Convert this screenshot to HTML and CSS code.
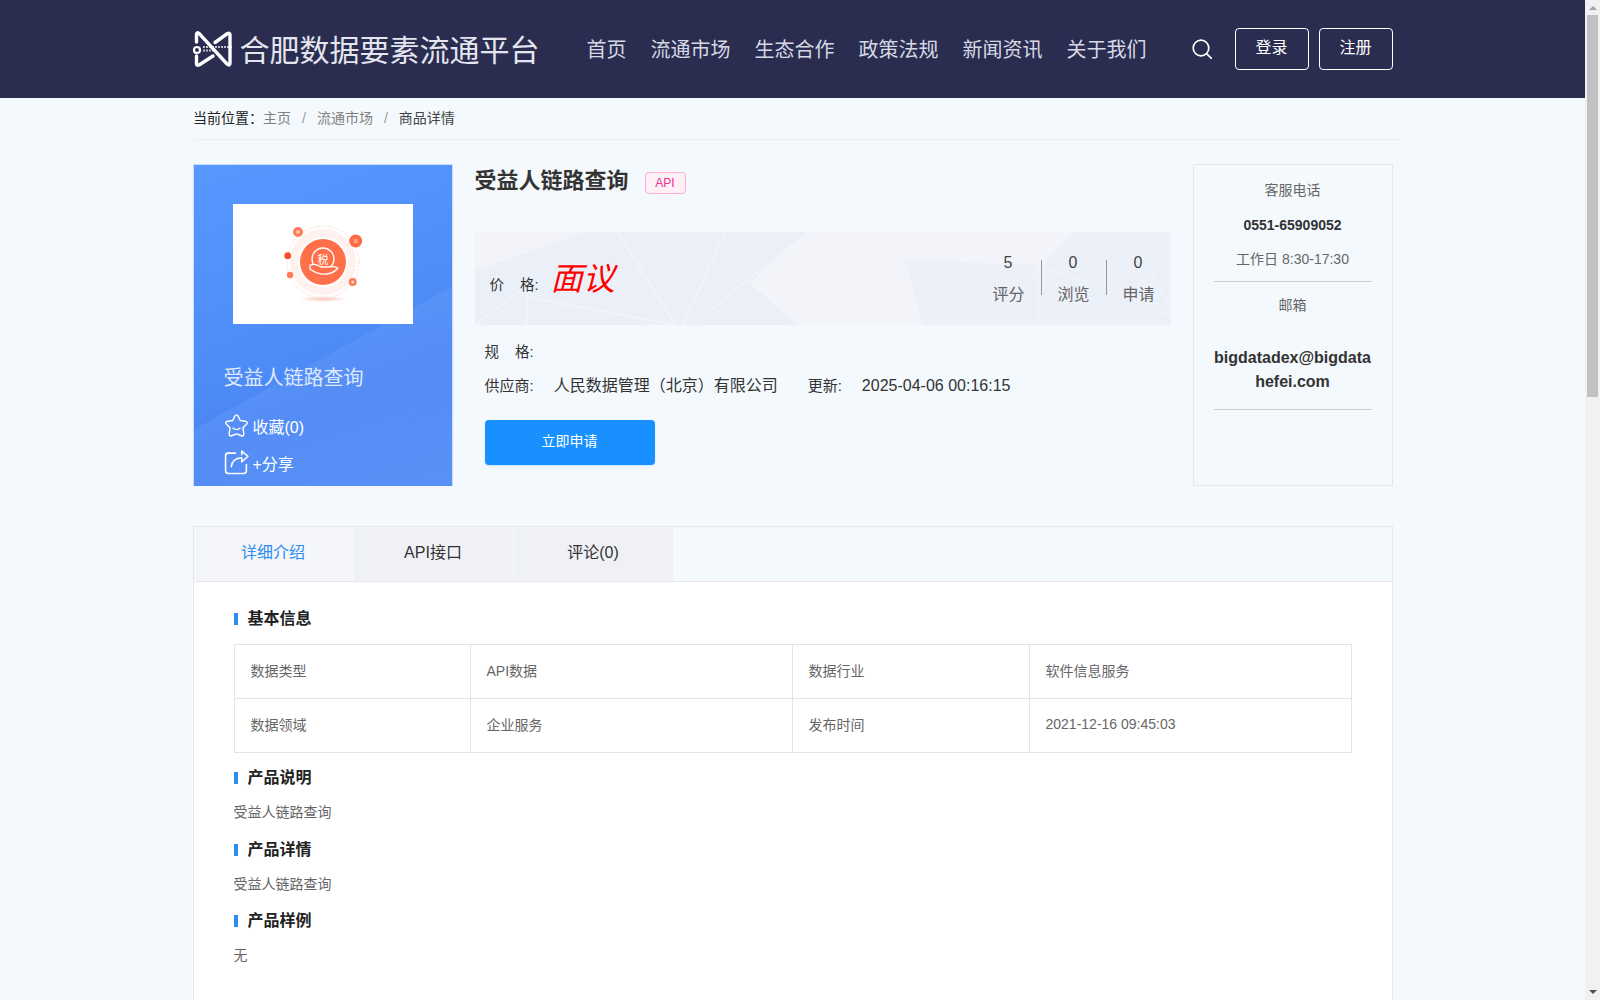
FILE: index.html
```html
<!DOCTYPE html>
<html lang="zh-CN">
<head>
    <meta charset="UTF-8">
    <title>合肥数据要素流通平台</title>
    <link rel="stylesheet" href="styles.css">
</head>
<body>
    <div class="page">
        <header class="header">
            <div class="wrap header-inner">
                <a class="brand">
                    <svg class="brand-logo" viewBox="0 0 40 40">
                        <path d="M3.500 13V5.500Q3.500 3 5.800 4.200L34 35Q37 37.500 37 34V6Q37 3.500 34.500 4.500L22 13.500" fill="none" stroke="#fff" stroke-width="3.400" stroke-linejoin="round" stroke-linecap="round"/>
                        <path d="M3.500 27V34.500Q3.500 37 6 36L20 27" fill="none" stroke="#fff" stroke-width="3.400" stroke-linejoin="round" stroke-linecap="round"/>
                        <circle cx="4" cy="21" r="3" fill="#2a2d50" stroke="#fff" stroke-width="2.200"/>
                        <path d="M10 18H39" stroke="#fff" stroke-width="2" stroke-dasharray="2 1" opacity="0.700"/>
                        <path d="M10 21.500H20" stroke="#fff" stroke-width="2" stroke-dasharray="2 1" opacity="0.700"/>
                    </svg>
                    <span class="brand-name">合肥数据要素流通平台</span>
                </a>
                <nav class="nav">
                    <a>首页</a>
                    <a>流通市场</a>
                    <a>生态合作</a>
                    <a>政策法规</a>
                    <a>新闻资讯</a>
                    <a>关于我们</a>
                </nav>
                <svg class="search-icon" viewBox="0 0 20 20">
                    <circle cx="9" cy="9" r="7.800" fill="none" stroke="#fff" stroke-width="1.700"/>
                    <path d="M14.600 14.600L19.400 19.400" stroke="#fff" stroke-width="1.700" stroke-linecap="round"/>
                </svg>
                <a class="head-btn">登录</a>
                <a class="head-btn">注册</a>
            </div>
        </header>

        <div class="crumbs">
            <span class="crumbs-label">当前位置：</span><a>主页</a><i>/</i><a>流通市场</a><i>/</i><span class="crumbs-now">商品详情</span>
        </div>

        <div class="wrap product">
            <div class="cover">
                <div class="cover-img">
                    <svg viewBox="0 0 180 120" width="180" height="120">
                        <defs>
                            <radialGradient id="shade"><stop offset="0" stop-color="#f8c4ba"/><stop offset="1" stop-color="#fff"/></radialGradient>
                        </defs>
                        <ellipse cx="90" cy="95" rx="24" ry="3" fill="url(#shade)"/>
                        <circle cx="90" cy="58" r="36" fill="none" stroke="#fbdcd5" stroke-width="1" stroke-dasharray="2 1.500"/>
                        <circle cx="90" cy="58" r="29" fill="none" stroke="#fef1ee" stroke-width="8"/>
                        <circle cx="90" cy="58" r="23" fill="#ff704a"/>
                        <circle cx="90" cy="55" r="11" fill="none" stroke="#fff" stroke-width="1.300"/>
                        <text class="tax-char" x="90" y="59.500">税</text>
                        <path d="M77 61Q83 59 88 63L96 63Q101 62 105 64Q101 69 94 70Q85 71 77 65Z" fill="#ff704a" stroke="#fff" stroke-width="1.300" stroke-linejoin="round"/>
                        <circle cx="65" cy="28" r="5" fill="#ff7a55"/>
                        <circle cx="122.700" cy="37" r="6.500" fill="#ff6a42"/>
                        <circle cx="54.700" cy="51.700" r="3.400" fill="#f4502a"/>
                        <circle cx="57" cy="71" r="3.200" fill="#ff7a55"/>
                        <circle cx="119.700" cy="78" r="4" fill="#ff7a55"/>
                        <circle cx="119.700" cy="78" r="1.600" fill="#fff" opacity="0.700"/>
                        <circle cx="65" cy="28" r="2" fill="#fff" opacity="0.500"/>
                        <circle cx="122.700" cy="37" r="2.400" fill="#fff" opacity="0.350"/>
                    </svg>
                </div>
                <h2 class="cover-title">受益人链路查询</h2>
                <div class="cover-act">
                    <svg viewBox="0 0 24 24" width="25" height="25">
                        <path d="M12 1.800Q13 1.800 13.600 3L15.600 7.200 20.800 8Q23 8.600 22 10.400L18.200 14.200 19 19.800Q19 22.600 16.800 21.800L12 20 7.200 21.800Q5 22.600 5 19.800L5.800 14.200 2 10.400Q1 8.600 3.200 8L8.400 7.200 10.400 3Q11 1.800 12 1.800Z" fill="none" stroke="#fff" stroke-width="1.400" stroke-linejoin="round"/>
                        <path d="M8.500 14.500Q12 17.500 15.500 14.500" fill="none" stroke="#fff" stroke-width="1.300" stroke-linecap="round"/>
                    </svg>
                    <span>收藏(0)</span>
                </div>
                <div class="cover-act">
                    <svg viewBox="0 0 24 24" width="25" height="25">
                        <path d="M11 3H4Q1.500 3 1.500 5.500V20Q1.500 22.500 4 22.500H19Q21.500 22.500 21.500 20V14" fill="none" stroke="#fff" stroke-width="1.500" stroke-linecap="round"/>
                        <path d="M7 16Q8 8 17 7.500V11.500L23 6 17 1V4.500" fill="none" stroke="#fff" stroke-width="1.500" stroke-linecap="round" stroke-linejoin="round"/>
                    </svg>
                    <span>+分享</span>
                </div>
            </div>

            <div class="info">
                <div class="info-head">
                    <h1>受益人链路查询</h1>
                    <span class="tag">API</span>
                </div>
                <div class="band">
                    <svg class="band-bg" viewBox="0 0 696 93" preserveAspectRatio="none">
                        <polygon points="0,39 110,0 333,0 275,51 322,93 0,93" fill="#ebf0f8"/>
                        <polygon points="430,28 567,33 600,0 696,0 696,93 448,93" fill="#ebf0f9"/>
                        <g stroke="#fff" fill="none" stroke-width="1.500" opacity="0.350">
                            <path d="M143 0L200 93M250 0L208 93M333 0L217 93M0 93L52 53V93M52 65L200 93"/>
                            <path d="M653 0L696 76M563 34L696 76M567 33L517 93M563 93V35M696 78L667 93"/>
                        </g>
                    </svg>
                    <div class="price">
                        <span class="price-label">价&nbsp;&nbsp;&nbsp;&nbsp;格:</span>
                        <span class="price-value">面议</span>
                    </div>
                    <div class="stats">
                        <div class="stat"><b>5</b><span>评分</span></div>
                        <div class="stat"><b>0</b><span>浏览</span></div>
                        <div class="stat"><b>0</b><span>申请</span></div>
                    </div>
                </div>
                <div class="spec">规&nbsp;&nbsp;&nbsp;&nbsp;格:</div>
                <div class="supplier">
                    <span class="supplier-label">供应商:</span>
                    <span class="supplier-name">人民数据管理（北京）有限公司</span>
                    <span class="supplier-label update-label">更新:</span>
                    <span class="supplier-date">2025-04-06 00:16:15</span>
                </div>
                <a class="apply">立即申请</a>
            </div>

            <aside class="service">
                <p>客服电话</p>
                <p class="service-phone">0551-65909052</p>
                <p class="service-time">工作日 8:30-17:30</p>
                <hr>
                <p>邮箱</p>
                <p class="service-mail">bigdatadex@bigdatahefei.com</p>
                <hr>
            </aside>
        </div>

        <section class="wrap detail">
            <div class="tabs">
                <a class="tab active">详细介绍</a>
                <a class="tab">API接口</a>
                <a class="tab">评论(0)</a>
            </div>
            <div class="tab-body">
                <h3 class="sec-title">基本信息</h3>
                <table class="base-table">
                    <tr>
                        <td class="col-a">数据类型</td>
                        <td class="col-b">API数据</td>
                        <td class="col-c">数据行业</td>
                        <td>软件信息服务</td>
                    </tr>
                    <tr>
                        <td>数据领域</td>
                        <td>企业服务</td>
                        <td>发布时间</td>
                        <td>2021-12-16 09:45:03</td>
                    </tr>
                </table>
                <h3 class="sec-title">产品说明</h3>
                <p class="sec-text">受益人链路查询</p>
                <h3 class="sec-title">产品详情</h3>
                <p class="sec-text">受益人链路查询</p>
                <h3 class="sec-title">产品样例</h3>
                <p class="sec-text">无</p>
            </div>
        </section>
    </div>

    <div class="scrollbar">
        <span class="arrow arrow-up"></span>
        <div class="scrollbar-track"><div class="scrollbar-thumb"></div></div>
        <span class="arrow arrow-down"></span>
    </div>
</body>
</html>
```

FILE: styles.css
```css
* {
    box-sizing: border-box;
}

html, body {
    height: 100%;
    margin: 0;
    overflow: hidden;
}

body {
    display: flex;
    background: #f4f9fd;
    color: #333;
    font-family: "Liberation Sans", "Noto Sans CJK SC", sans-serif;
    font-size: 14px;
}

p, h1, h2, h3 {
    margin: 0;
}

.page {
    flex: 1;
    min-width: 0;
    overflow: hidden;
}

.wrap {
    width: 1200px;
    margin: 0 auto;
}

/* header */
.header {
    height: 98px;
    background: #2a2d50;
}

.header-inner {
    height: 100%;
    display: flex;
    align-items: center;
}

.brand {
    display: flex;
    align-items: center;
    flex: none;
}

.brand-logo {
    width: 40px;
    height: 40px;
}

.brand-name {
    margin-left: 7px;
    margin-top: -3px;
    font-size: 30px;
    color: #e4e5ee;
    white-space: nowrap;
}

.nav {
    display: flex;
    flex: none;
    gap: 24px;
    margin-left: 47px;
    margin-top: -2px;
    font-size: 20px;
    color: #d6d8e4;
    white-space: nowrap;
}

.search-icon {
    flex: none;
    width: 20px;
    height: 20px;
    margin-left: 45px;
    margin-right: 23px;
}

.head-btn {
    flex: none;
    width: 74px;
    height: 42px;
    line-height: 38px;
    margin-left: 10px;
    border: 1px solid #fff;
    border-radius: 4px;
    color: #fff;
    font-size: 16px;
    text-align: center;
}

.search-icon + .head-btn {
    margin-left: 0;
}

/* breadcrumb */
.crumbs {
    width: 1210px;
    height: 42px;
    margin-left: 193px;
    line-height: 40px;
    border-bottom: 1px solid #ebeef2;
    color: #808080;
}

.crumbs-label {
    color: #222;
}

.crumbs i {
    margin: 0 11px;
    font-style: normal;
    color: #999;
}

.crumbs-now {
    color: #444;
}

/* product */
.product {
    display: flex;
    height: 322px;
    margin-top: 24px;
}

.cover {
    width: 260px;
    padding: 39px 0 0 30px;
    border: 1px solid #c8dcfb;
    border-bottom: 0;
    color: #fff;
    background:
        linear-gradient(151deg, transparent 57%, rgba(255, 255, 255, 0.06) 57%, rgba(255, 255, 255, 0.05) 100%),
        linear-gradient(160deg, #5798ff 0%, #4f8ef9 45%, #4a86f4 70%, #4f8cf6 100%);
}

.cover-img {
    width: 180px;
    height: 120px;
    margin-left: 9px;
    background: #fff;
}

.cover-img svg {
    display: block;
}

.tax-char {
    font-size: 11px;
    fill: #fff;
    text-anchor: middle;
}

.cover-title {
    margin-top: 40px;
    font-size: 20px;
    font-weight: 400;
    line-height: 28px;
    color: #dfe9fd;
}

.cover-act {
    display: flex;
    align-items: center;
    gap: 4px;
    height: 25px;
    margin-top: 12px;
    font-size: 16px;
}

.cover-title + .cover-act {
    margin-top: 21px;
}

.info {
    width: 696px;
    margin-left: 22px;
}

.info-head {
    display: flex;
    align-items: center;
    height: 32px;
}

.info-head h1 {
    margin-top: 2px;
    font-size: 22px;
    line-height: 32px;
    color: #333;
}

.tag {
    width: 41px;
    height: 22px;
    margin-left: 16px;
    margin-top: 6px;
    line-height: 20px;
    border: 1px solid #ffadd2;
    border-radius: 4px;
    background: #fff0f6;
    color: #eb2f96;
    font-size: 12px;
    text-align: center;
}

.band {
    position: relative;
    display: flex;
    justify-content: space-between;
    height: 93px;
    margin-top: 36px;
    background: #f3f4f9;
}

/* decorative polygons behind the price row */
.band-bg {
    position: absolute;
    left: 0;
    top: 0;
    width: 100%;
    height: 100%;
}

.price, .stats {
    position: relative;
}

.price {
    display: flex;
    align-items: center;
    padding-left: 15px;
}

.price-label {
    font-size: 14.500px;
    margin-top: 10px;
}

.price-value {
    margin-left: 12px;
    margin-top: -6px;
    font-size: 32px;
    font-style: italic;
    color: #f00;
}

.stats {
    display: flex;
    padding-top: 17px;
}

.stat {
    position: relative;
    width: 65px;
    height: 66px;
    display: flex;
    flex-direction: column;
    align-items: center;
    font-size: 16px;
    color: #666;
}

.stat b {
    font-weight: 400;
    line-height: 27px;
    color: #444;
}

.stat span {
    margin-left: 1px;
    line-height: 37px;
}

/* thin rule between two stats */
.stat + .stat::before {
    content: "";
    position: absolute;
    left: 0;
    top: 11px;
    height: 35px;
    border-left: 1px solid #999;
}

.spec, .supplier {
    padding-left: 10px;
    font-size: 15px;
    color: #333;
}

.spec {
    margin-top: 17px;
    font-size: 14.500px;
    line-height: 20px;
}

.supplier {
    display: flex;
    align-items: center;
    margin-top: 14px;
    line-height: 20px;
}

.supplier-name {
    margin-left: 20px;
    font-size: 16px;
    color: #333;
}

.update-label {
    margin-left: 30px;
}

.supplier-date {
    margin-left: 20px;
    font-size: 16px;
}

.apply {
    display: block;
    width: 170px;
    height: 45px;
    line-height: 43px;
    margin: 24px 0 0 10px;
    border-radius: 4px;
    background: #1890ff;
    color: #fff;
    text-align: center;
    box-shadow: 0 1px 2px rgba(24, 144, 255, 0.2);
}

.service {
    width: 200px;
    margin-left: 22px;
    padding: 14px 20px 0;
    border: 1px solid #e4e8ec;
    color: #666;
    text-align: center;
    line-height: 22px;
}

.service-phone {
    margin-top: 13px;
    font-weight: 700;
    color: #333;
}

.service-time {
    margin-top: 12px;
}

.service hr {
    height: 1px;
    margin: 11px 0 12px;
    border: 0;
    background: #ccc;
}

.service-mail {
    margin-top: 30px;
    font-size: 16px;
    line-height: 24px;
    font-weight: 700;
    color: #333;
    word-break: break-all;
}

.service-mail + hr {
    margin-top: 15px;
}

/* detail tabs */
.detail {
    margin-top: 40px;
    border: 1px solid #e6e8eb;
    border-bottom: 0;
    background: #fff;
}

.tabs {
    display: flex;
    height: 55px;
    background: #f4f9fd;
    border-bottom: 1px solid #e6e8eb;
}

.tab {
    width: 159px;
    height: 54px;
    margin-right: 1px;
    line-height: 52px;
    background: #f0f1f6;
    font-size: 16px;
    color: #333;
    text-align: center;
}

.tab.active {
    background: #f5f6fa;
    color: #2d8cf0;
}

.tab-body {
    padding: 24px 40px 80px;
}

.sec-title {
    position: relative;
    padding-left: 14px;
    font-size: 16px;
    line-height: 26px;
    color: #222;
}

.sec-title::before {
    content: "";
    position: absolute;
    left: 0;
    top: 7px;
    width: 4px;
    height: 12px;
    background: #2d8cf0;
}

.base-table {
    width: 1118px;
    margin: 12px 0 12px;
    border-collapse: collapse;
    table-layout: fixed;
    color: #666;
}

.base-table td {
    height: 54px;
    padding: 0 16px 4px;
    border: 1px solid #e4e4e4;
}

.base-table .col-a {
    width: 236px;
}

.base-table .col-b {
    width: 322px;
}

.base-table .col-c {
    width: 237px;
}

.sec-text {
    margin-top: 9px;
    margin-bottom: 12.500px;
    line-height: 24px;
    color: #666;
}

/* window scrollbar */
.scrollbar {
    width: 15px;
    height: 100%;
    display: flex;
    flex-direction: column;
    background: #f1f1f1;
    align-items: center;
}

.scrollbar-track {
    flex: 1;
    width: 100%;
}

.scrollbar-thumb {
    height: 382px;
    margin: 0 2px;
    background: #c1c1c1;
}

.arrow {
    width: 0;
    height: 0;
    border-left: 4px solid transparent;
    border-right: 4px solid transparent;
}

.arrow-up {
    border-bottom: 4px solid #a3a3a3;
    margin: 6px 0 5px;
}

.arrow-down {
    border-top: 4px solid #505050;
    margin: 5px 0 6px;
}
```
